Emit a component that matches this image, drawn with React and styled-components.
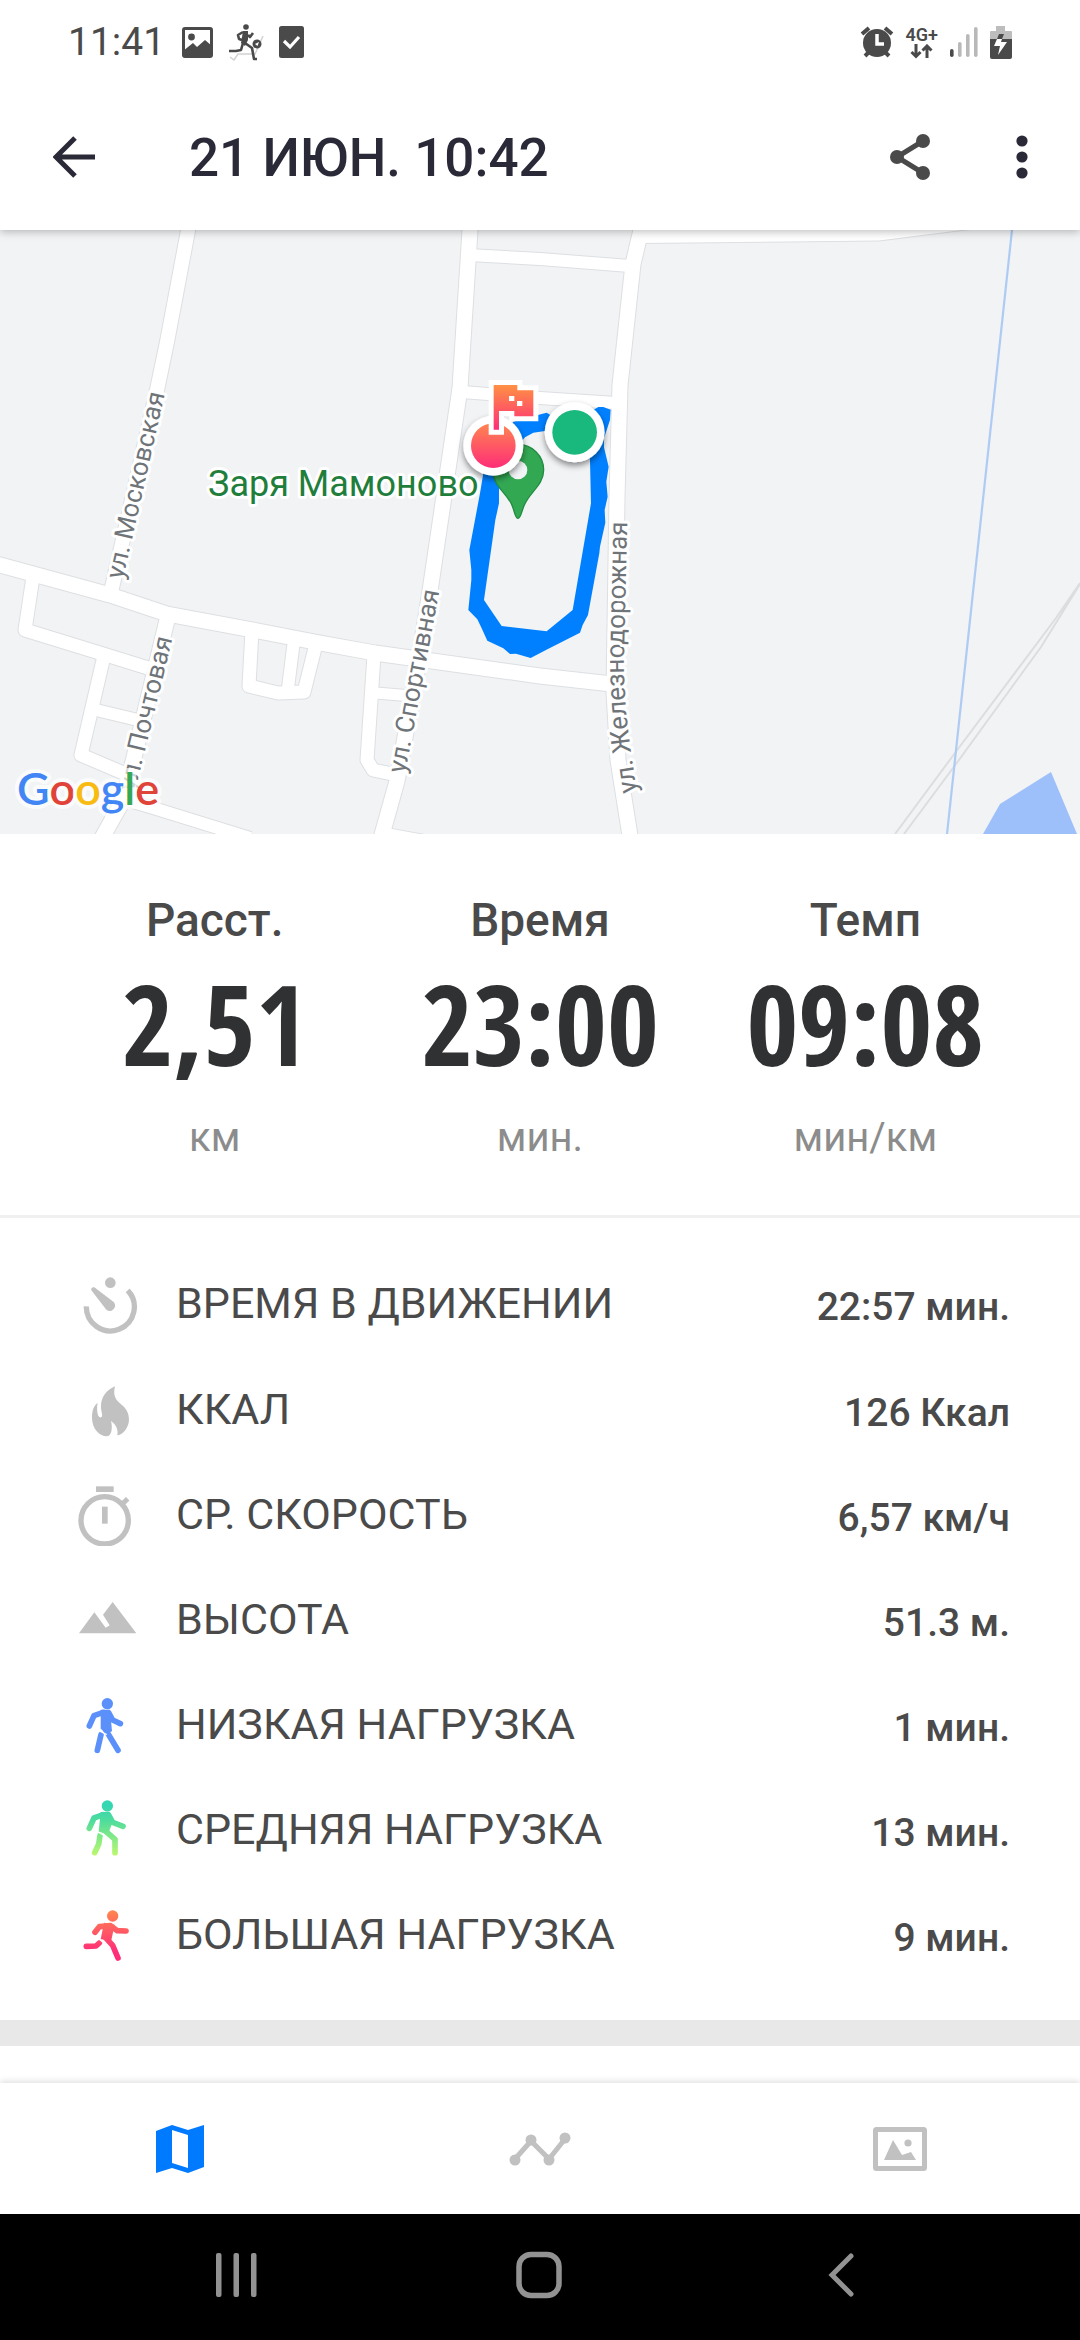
import styled, { createGlobalStyle } from "styled-components";

const track =
  "M250 185L335 162L350 158L370 170L490 150L505 141L520 141L542 149L540 180L522 235L522 262L536 320L529 365L533 410L524 450L526 488L510 560L508 580L474 765L458 795L450 818L348 870L302 894L258 881L240 882L220 865L172 842L155 805L142 778L115 750L124 660L124 630L118 570L150 400L160 340L200 250Z" +
  "M285 232L310 218L345 213L470 220L480 300L483 430L428 750L350 814L215 798L162 720L196 480L207 430L207 390L230 300Z";

const roads = [
  { d: "M190 -10L167 112L157 160L111 362", w: 14 },
  { d: "M-10 333L0 335L110 365L167 384L258 401L320 413L375 423L540 446L612 454", w: 15 },
  { d: "M470 -10L470 0L460 158L430 361L417 442L397 551L380 612", w: 15 },
  { d: "M645 -10L641 0L633 34L620 155L617 267L614 462L618 530L631 612", w: 15 },
  { d: "M468 25L540 29L630 36", w: 12 },
  { d: "M462 162L540 168L616 173", w: 12 },
  { d: "M33 347L25 400L103 424L148 438", w: 13 },
  { d: "M104 426L81 525L128 545", w: 13 },
  { d: "M96 480L138 490", w: 12 },
  { d: "M168 386L131 540L122 572L102 608", w: 15 },
  { d: "M126 570L150 577L250 608", w: 12 },
  { d: "M252 400L249 456L278 463L304 462L316 414", w: 13 },
  { d: "M294 410L288 458", w: 12 },
  { d: "M374 425L367 530L373 540L397 545", w: 13 },
  { d: "M376 463L412 466", w: 11 },
  { d: "M380 604L430 613", w: 14 },
];

const streets = [
  { id: "moskovskaya", name: "ул. Московская", d: "M123 350L169 145" },
  { id: "pochtovaya", name: "ул. Почтовая", d: "M135 562L177 390" },
  { id: "sportivnaya", name: "ул. Спортивная", d: "M405 544L443 342" },
  {
    id: "zheleznodorozhnaya",
    name: "ул. Железнодорожная",
    d: "M637 562L630 515Q624 470 624 430L628 260",
  },
];

const totals = [
  { label: "Расст.", value: "2,51", unit: "км" },
  { label: "Время", value: "23:00", unit: "мин." },
  { label: "Темп", value: "09:08", unit: "мин/км" },
];

const details = [
  { label: "ВРЕМЯ В ДВИЖЕНИИ", value: "22:57 мин.", Icon: MovingTimeIcon },
  { label: "ККАЛ", value: "126 Ккал", Icon: FlameIcon },
  { label: "СР. СКОРОСТЬ", value: "6,57 км/ч", Icon: StopwatchIcon },
  { label: "ВЫСОТА", value: "51.3 м.", Icon: MountainsIcon },
  { label: "НИЗКАЯ НАГРУЗКА", value: "1 мин.", Icon: LowLoadIcon },
  { label: "СРЕДНЯЯ НАГРУЗКА", value: "13 мин.", Icon: MediumLoadIcon },
  { label: "БОЛЬШАЯ НАГРУЗКА", value: "9 мин.", Icon: HighLoadIcon },
];

export default function App() {
  return (
    <Page>
      <GlobalStyle />
      <StatusBar />
      <Header>
        <IconButton type="button" aria-label="Назад">
          <svg width="42" height="42" viewBox="0 0 42 42">
            <path
              d="M42 21H4M22 2L3 21L22 40"
              fill="none"
              stroke="#2a2937"
              strokeWidth="5"
            />
          </svg>
        </IconButton>
        <Title>21 ИЮН. 10:42</Title>
        <IconButton type="button" aria-label="Поделиться">
          <svg width="40" height="46" viewBox="0 0 40 46">
            <path
              d="M33 7L7 23L33 39"
              fill="none"
              stroke="#4a4a4a"
              strokeWidth="5"
            />
            <g fill="#4a4a4a">
              <circle cx="33" cy="7" r="7" />
              <circle cx="7" cy="23" r="7" />
              <circle cx="33" cy="39" r="7" />
            </g>
          </svg>
        </IconButton>
        <IconButton type="button" aria-label="Ещё">
          <svg width="12" height="44" viewBox="0 0 12 44" fill="#2a2937">
            <circle cx="6" cy="6" r="5.6" />
            <circle cx="6" cy="22" r="5.6" />
            <circle cx="6" cy="38" r="5.6" />
          </svg>
        </IconButton>
      </Header>
      <Content>
        <RouteMap />
        <Totals>
          {totals.map((item) => (
            <Total key={item.label}>
              <TotalLabel>{item.label}</TotalLabel>
              <TotalValue>{item.value}</TotalValue>
              <TotalUnit>{item.unit}</TotalUnit>
            </Total>
          ))}
        </Totals>
        <Details>
          {details.map(({ label, value, Icon }) => (
            <DetailRow key={label}>
              <DetailLabel>
                <Icon />
                {label}
              </DetailLabel>
              <DetailValue>{value}</DetailValue>
            </DetailRow>
          ))}
        </Details>
        <Separator />
      </Content>
      <TabBar />
      <SystemNav />
    </Page>
  );
}

function StatusBar() {
  return (
    <StatusDiv>
      <Clock>11:41</Clock>
      <StatusGroup $gap="15px">
        <svg width="31" height="31" viewBox="0 0 31 31">
          <rect x="1.5" y="1.5" width="28" height="28" rx="1.5" fill="none" stroke="#4a4a4a" strokeWidth="3" />
          <circle cx="9.5" cy="10" r="3.4" fill="#4a4a4a" />
          <path d="M1 24L11 16L15 20L23 13L30 19V30H1Z" fill="#4a4a4a" />
        </svg>
        <svg width="36" height="38" viewBox="0 0 36 38">
          <path d="M2 34L6 37L10 31H27L35 13" fill="none" stroke="#d2d2d2" strokeWidth="1.5" />
          <circle cx="18" cy="4" r="2.8" fill="#4a4a4a" />
          <path d="M15 8L20 8L20 17L17 23L13 20Z" fill="#4a4a4a" />
          <path
            d="M15 9L10 12L11 16L14 17M20 12L22 14L25 10M15 20L13 27L8 28L1 28M17 20L24 25L26 36L29 36"
            fill="none"
            stroke="#4a4a4a"
            strokeWidth="2.6"
            strokeLinejoin="round"
          />
          <circle cx="29" cy="21" r="4.5" fill="#4a4a4a" />
          <path d="M27 21L31 19L29.5 23Z" fill="#fff" />
        </svg>
        <svg width="25" height="32" viewBox="0 0 25 32">
          <rect width="25" height="32" rx="2.5" fill="#4a4a4a" />
          <path d="M5 15L11 21L20 11" fill="none" stroke="#fff" strokeWidth="3.2" />
        </svg>
      </StatusGroup>
      <StatusSpacer />
      <StatusGroup $gap="12px">
        <svg width="34" height="32" viewBox="0 0 34 32">
          <path d="M2 8L9 2M32 8L25 2M5 30L10 25M29 30L24 25" stroke="#4a4a4a" strokeWidth="4" />
          <circle cx="17" cy="17" r="14" fill="#4a4a4a" />
          <path d="M17 8V18H24" fill="none" stroke="#fff" strokeWidth="3.5" />
        </svg>
        <Network>
          4G+
          <svg width="24" height="15" viewBox="0 0 24 15">
            <path
              d="M6 0V12M1.5 8L6 12.5L10.5 8M17 14V2M12.5 6.5L17 2L21.5 6.5"
              fill="none"
              stroke="#4a4a4a"
              strokeWidth="3"
            />
          </svg>
        </Network>
        <svg width="28" height="30" viewBox="0 0 28 30">
          <rect y="22" width="3.6" height="8" rx="1.8" fill="#4a4a4a" />
          <g fill="#b9b9b9">
            <rect x="8" y="15" width="3.6" height="15" rx="1.8" />
            <rect x="16" y="7" width="3.6" height="23" rx="1.8" />
            <rect x="24" width="3.6" height="30" rx="1.8" />
          </g>
        </svg>
        <svg width="22" height="33" viewBox="0 0 22 33">
          <path d="M6 0H15V5H21Q22 5 22 6V13H0V6Q0 5 1 5H6Z" fill="#bdbdbd" />
          <path d="M0 13H22V31Q22 33 20 33H2Q0 33 0 31Z" fill="#4a4a4a" />
          <path d="M9 8H14L12 13H7Z" fill="#4a4a4a" />
          <path d="M7 13H12L11 16H17L8 29L10 20H4Z" fill="#fff" />
        </svg>
      </StatusGroup>
    </StatusDiv>
  );
}

function RouteMap() {
  return (
    <MapSvg viewBox="0 0 1080 604" preserveAspectRatio="xMidYMid slice">
      <defs>
        <linearGradient id="flagFill" gradientUnits="userSpaceOnUse" x1="0" y1="75" x2="0" y2="209">
          <stop offset="0" stopColor="#ff9144" />
          <stop offset="1" stopColor="#ff2d78" />
        </linearGradient>
        <linearGradient id="finishFill" x1="0" y1="0" x2="0" y2="1">
          <stop offset="0" stopColor="#ff8550" />
          <stop offset="1" stopColor="#ff2d78" />
        </linearGradient>
        <filter id="markerShadow" x="-50%" y="-50%" width="200%" height="200%">
          <feDropShadow dx="0" dy="10" stdDeviation="9" floodOpacity="0.45" />
        </filter>
        {streets.map((street) => (
          <path key={street.id} id={street.id} d={street.d} />
        ))}
      </defs>

      <rect width="1080" height="604" fill="#f1f3f5" />
      <path d="M1080 353L1056 388L955 523L895 604M1080 354L1041 417L956 534L904 604" fill="none" stroke="#dcdddf" strokeWidth="2" />
      <path d="M1051 542L1000 574L983 604H1077Z" fill="#9dbffa" />
      <path d="M1012 0L947 604" stroke="#aecbf4" strokeWidth="2.2" />

      <g fill="none" strokeLinejoin="round">
        {roads.map((road) => (
          <path key={road.d} d={road.d} stroke="#dddfe2" strokeWidth={road.w + 2} />
        ))}
        <path d="M640 -4V13L879 10.5L970 -1" stroke="#dddfe2" strokeWidth="2" />
        <path d="M640 -4V13L879 10.5L970 -1Z" fill="#fff" />
        {roads.map((road) => (
          <path key={road.d} d={road.d} stroke="#fff" strokeWidth={road.w} />
        ))}
      </g>

      <StreetLabel>
        {streets.map((street) => (
          <text key={street.id}>
            <textPath href={`#${street.id}`}>{street.name}</textPath>
          </text>
        ))}
      </StreetLabel>

      <g transform="translate(430 130) scale(0.3333)">
        <path d={track} fill="#0080ff" fillRule="evenodd" />
        <path
          d="M264 475C255 475 255 455 244 431C225 395 188 375 188 330A76 76 0 0 1 341 330C341 375 300 395 283 435C274 455 273 475 264 475Z"
          fill="#33a853"
          stroke="#238c42"
          strokeWidth="4"
        />
        <circle cx="264" cy="330" r="28" fill="#f1f3f5" />
      </g>
      <PlaceLabel x="208" y="266">
        Заря Мамоново
      </PlaceLabel>
      <g transform="translate(430 130) scale(0.3333)">
        <circle cx="434" cy="217" r="90" fill="#fff" filter="url(#markerShadow)" />
        <circle cx="434" cy="217" r="67" fill="#19b97e" />
        <circle cx="190" cy="257" r="90" fill="#fff" filter="url(#markerShadow)" />
        <circle cx="190" cy="257" r="67" fill="url(#finishFill)" />
        <path
          d="M191 75H262V91H310V169H253V153H207V209H191Z"
          fill="url(#flagFill)"
          stroke="#fff"
          strokeWidth="30"
          paintOrder="stroke"
        />
        <path d="M237 108H253V123H277V138H261V123H237Z" fill="#fff" />
      </g>

      <MapLogo x="17" y="575">
        <tspan fill="#4285f4">G</tspan>
        <tspan fill="#e04338">o</tspan>
        <tspan fill="#f7bb12">o</tspan>
        <tspan fill="#4285f4">g</tspan>
        <tspan fill="#34a853">l</tspan>
        <tspan fill="#e04338">e</tspan>
      </MapLogo>
    </MapSvg>
  );
}

function TabBar() {
  return (
    <TabNav>
      <Tab type="button" aria-label="Карта">
        <svg width="48" height="48" viewBox="0 0 48 48">
          <path
            d="M0 6L16 0L32 5L48 0V42L32 48L16 43L0 48ZM16 5V38L32 43V10Z"
            fill="#007aff"
            fillRule="evenodd"
          />
        </svg>
      </Tab>
      <Tab type="button" aria-label="График">
        <svg width="62" height="34" viewBox="0 0 62 34" fill="#c1c1c1">
          <path d="M6 27L22 9L40 27L56 7" fill="none" stroke="#c1c1c1" strokeWidth="5" />
          <circle cx="6" cy="28" r="5.5" />
          <circle cx="22" cy="8" r="5.5" />
          <circle cx="40" cy="28" r="5.5" />
          <circle cx="56" cy="6" r="5.5" />
        </svg>
      </Tab>
      <Tab type="button" aria-label="Фото">
        <svg width="54" height="44" viewBox="0 0 54 44" fill="#c1c1c1">
          <rect x="2.5" y="2.5" width="49" height="39" rx="1" fill="none" stroke="#c1c1c1" strokeWidth="5" />
          <path d="M11 33L20 13L29 28L38 25L43 33Z" />
          <circle cx="35" cy="16" r="3.6" />
        </svg>
      </Tab>
    </TabNav>
  );
}

function SystemNav() {
  return (
    <SystemNavDiv>
      <Tab type="button" aria-label="Недавние">
        <svg width="42" height="44" viewBox="0 0 42 44" fill="#929292">
          <rect width="5.5" height="44" rx="2" />
          <rect x="17.5" width="5.5" height="44" rx="2" />
          <rect x="35" width="5.5" height="44" rx="2" />
        </svg>
      </Tab>
      <Tab type="button" aria-label="Домой">
        <svg width="46" height="48" viewBox="0 0 46 48">
          <rect x="3" y="3.5" width="40" height="41" rx="12" fill="none" stroke="#929292" strokeWidth="5.5" />
        </svg>
      </Tab>
      <Tab type="button" aria-label="Назад">
        <svg width="26" height="44" viewBox="0 0 26 44">
          <path d="M23 3L4 22L23 41" fill="none" stroke="#929292" strokeWidth="5" strokeLinecap="round" />
        </svg>
      </Tab>
    </SystemNavDiv>
  );
}

function MovingTimeIcon() {
  return (
    <DetailIcon>
      <path d="M37 106A72 72 0 1 0 161 58" fill="none" stroke="#c1c1c1" strokeWidth="16" />
      <circle cx="109" cy="35" r="16" />
      <path d="M52 58A7 7 0 0 1 61 49L119 93A16 16 0 0 1 97 116Z" />
    </DetailIcon>
  );
}

function FlameIcon() {
  return (
    <DetailIcon>
      <path d="M123 28C99 38 80 60 81 90C81 104 86 110 84 118C83 123 76 122 74 118C69 109 68 92 71 77C60 86 54 98 54 122C54 156 78 178 98 178C114 178 116 150 111 132C124 140 134 158 130 175C150 172 165 148 165 128C165 110 158 98 148 88C132 74 114 64 123 28Z" />
    </DetailIcon>
  );
}

function StopwatchIcon() {
  return (
    <DetailIcon>
      <circle cx="92" cy="115" r="71" fill="none" stroke="#c1c1c1" strokeWidth="16" />
      <rect x="66" y="13" width="53" height="17" />
      <rect x="84" y="74" width="17" height="51" />
      <path d="M141 70L161 50" stroke="#c1c1c1" strokeWidth="15" />
    </DetailIcon>
  );
}

function MountainsIcon() {
  return (
    <DetailIcon>
      <path d="M15 139L61 76L95 122L107 115L87 83L116 45L187 139Z" />
    </DetailIcon>
  );
}

function LowLoadIcon() {
  return (
    <DetailIcon>
      <g fill="none" stroke="#5b90fa" strokeWidth="17" strokeLinecap="round" strokeLinejoin="round">
        <path d="M46 102L60 71L88 61M104 62L116 84L139 95M94 112L132 175M81 128L70 175" />
      </g>
      <path d="M80 53H108L114 118L98 124L80 110Z" fill="#5b90fa" />
      <path d="M68 112L98 128" stroke="#fff" strokeWidth="4" />
      <circle cx="100" cy="35" r="17" fill="#5b90fa" />
    </DetailIcon>
  );
}

function MediumLoadIcon() {
  return (
    <DetailIcon>
      <linearGradient id="mediumLoad" gradientUnits="userSpaceOnUse" x1="0" y1="25" x2="0" y2="178">
        <stop offset="0" stopColor="#35d6b4" />
        <stop offset="0.3" stopColor="#4edc9c" />
        <stop offset="1" stopColor="#bff86e" />
      </linearGradient>
      <g fill="none" stroke="url(#mediumLoad)" strokeWidth="17" strokeLinecap="round" strokeLinejoin="round">
        <path d="M46 94L60 63L88 53M104 54L116 76L147 88M92 100L123 127L123 167M78 116L74 142L62 167" />
      </g>
      <path d="M80 45H108L114 80L102 112L74 104Z" fill="url(#mediumLoad)" />
      <path d="M64 100L92 116" stroke="#fff" strokeWidth="4" />
      <circle cx="100" cy="27" r="17" fill="url(#mediumLoad)" />
    </DetailIcon>
  );
}

function HighLoadIcon() {
  return (
    <DetailIcon>
      <linearGradient id="highLoad" gradientUnits="userSpaceOnUse" x1="0" y1="30" x2="0" y2="150">
        <stop offset="0" stopColor="#ff8350" />
        <stop offset="1" stopColor="#ff2d78" />
      </linearGradient>
      <g fill="none" stroke="url(#highLoad)" strokeWidth="17" strokeLinecap="round" strokeLinejoin="round">
        <path d="M63 91L76 74L110 71L130 86L156 87M94 106L116 130L132 168M76 123L66 132L37 133" />
      </g>
      <path d="M90 62L122 68L112 114L80 112Z" fill="url(#highLoad)" />
      <path d="M72 108L90 124" stroke="#fff" strokeWidth="4" />
      <circle cx="116" cy="42" r="17" fill="url(#highLoad)" />
    </DetailIcon>
  );
}

const GlobalStyle = createGlobalStyle`
  body {
    margin: 0;
    background-color: #fff;
    font-family: Roboto, "Noto Sans", sans-serif;
  }

  svg {
    display: block;
  }
`;

const Page = styled.div`
  display: flex;
  flex-direction: column;
  min-height: 100vh;
`;

const StatusDiv = styled.div`
  display: flex;
  align-items: center;
  height: 84px;
  padding: 0 68px;
  box-sizing: border-box;
  position: relative;
  z-index: 1;
  background-color: #fff;
  color: #4a4a4a;
`;

const Clock = styled.span`
  margin-right: 17px;
  font-size: 39px;
  line-height: 46px;
`;

const StatusGroup = styled.div`
  display: flex;
  align-items: center;
  gap: ${(props) => props.$gap};
`;

const StatusSpacer = styled.div`
  flex: 1;
`;

const Network = styled.span`
  display: flex;
  flex-direction: column;
  align-items: center;
  font-size: 18px;
  font-weight: 600;
  line-height: 18px;
`;

const Header = styled.header`
  display: flex;
  align-items: center;
  gap: 48px;
  height: 146px;
  padding: 0 26px 0 42px;
  box-sizing: border-box;
  position: relative;
  background-color: #fff;
  box-shadow: 0 2px 8px rgba(0, 0, 0, 0.25);
`;

const IconButton = styled.button`
  display: flex;
  align-items: center;
  justify-content: center;
  width: 64px;
  height: 64px;
  padding: 0;
  border: none;
  background: none;
`;

const Title = styled.h1`
  flex: 1;
  margin: 0;
  padding: 2px 0 0 35px;
  color: #2a2937;
  font-size: 53px;
  font-weight: 500;
  line-height: 64px;
`;

const Content = styled.main`
  flex: 1;
`;

const MapSvg = styled.svg`
  width: 100%;
  height: auto;
`;

const StreetLabel = styled.g`
  fill: #6f7479;
  stroke: #fff;
  stroke-width: 6px;
  stroke-linejoin: round;
  paint-order: stroke;
  font-size: 26px;
`;

const PlaceLabel = styled.text`
  fill: #1f7e3b;
  stroke: #fff;
  stroke-width: 6px;
  stroke-linejoin: round;
  paint-order: stroke;
  font-size: 36px;
`;

const MapLogo = styled.text`
  stroke: rgba(255, 255, 255, 0.7);
  stroke-width: 8px;
  stroke-linejoin: round;
  paint-order: stroke;
  font-family: Lato, sans-serif;
  font-size: 45px;
  font-weight: 600;
`;

const Totals = styled.section`
  display: grid;
  grid-template-columns: repeat(3, 1fr);
  padding: 56px 52px 47px;
  border-bottom: 3px solid #f0f0f0;
`;

const Total = styled.div`
  display: flex;
  flex-direction: column;
  align-items: center;
`;

const TotalLabel = styled.span`
  color: #4a4a4a;
  font-size: 46px;
  font-weight: 500;
  line-height: 60px;
`;

const TotalValue = styled.strong`
  margin-bottom: 12px;
  color: #303133;
  font-family: "Noto Sans ExtraCondensed", "Open Sans Condensed", "Roboto Condensed", Roboto, sans-serif;
  font-size: 112px;
  font-weight: 700;
  line-height: 146px;
`;

const TotalUnit = styled.span`
  color: #8c8c8c;
  font-size: 40px;
  line-height: 60px;
`;

const Details = styled.dl`
  margin: 0;
  padding: 31px 70px 34px 74px;
`;

const DetailRow = styled.div`
  display: flex;
  align-items: center;
  justify-content: space-between;
  height: 105px;

  &:first-child {
    height: 107px;
  }
`;

const DetailLabel = styled.dt`
  display: flex;
  align-items: center;
  gap: 38px;
  color: #4a4a4a;
  font-size: 43px;
`;

const DetailIcon = styled.svg.attrs({ viewBox: "0 0 192 192" })`
  width: 64px;
  height: 64px;
  fill: #c1c1c1;
`;

const DetailValue = styled.dd`
  margin: 0;
  padding-top: 8px;
  color: #4a4a4a;
  font-size: 39px;
  font-weight: 500;
`;

const Separator = styled.div`
  height: 26px;
  background-color: #e8e8e8;
`;

const TabNav = styled.nav`
  display: grid;
  grid-template-columns: repeat(3, 1fr);
  height: 131px;
  background-color: #fff;
  box-shadow: 0 -2px 6px rgba(0, 0, 0, 0.12);
`;

const Tab = styled.button`
  display: flex;
  align-items: center;
  justify-content: center;
  padding: 0;
  border: none;
  background: none;
`;

const SystemNavDiv = styled.div`
  display: grid;
  grid-template-columns: repeat(3, 1fr);
  height: 126px;
  padding: 0 88px 4px 86px;
  box-sizing: border-box;
  background-color: #000;
`;
